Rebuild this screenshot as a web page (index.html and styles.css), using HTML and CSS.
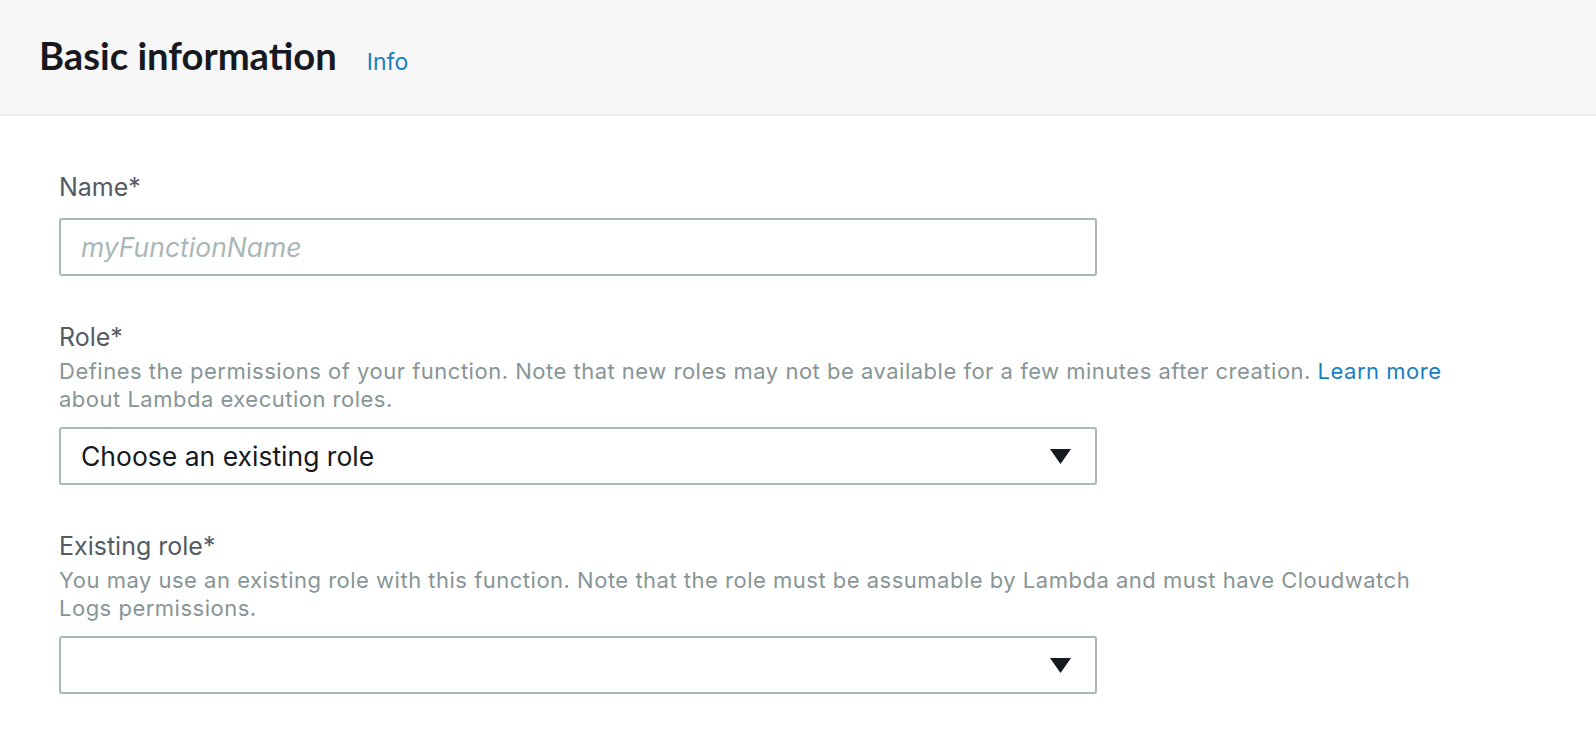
FILE: index.html
```html
<!DOCTYPE html>
<html lang="en">
<head>
<meta charset="utf-8">
<title>Basic information</title>
<link rel="stylesheet" href="styles.css">
</head>
<body>
<header class="panel-header">
  <h2 class="panel-title">Basic information</h2>
  <a class="info-link" href="#">Info</a>
</header>
<main class="panel-body">
  <div class="field field-first">
    <label class="field-label" for="fn-name">Name*</label>
    <input class="text-input" id="fn-name" type="text" placeholder="myFunctionName">
  </div>
  <div class="field">
    <div class="field-label">Role*</div>
    <p class="field-desc">Defines the permissions of your function. Note that new roles may not be available for a few minutes after creation. <a class="desc-link" href="#">Learn more</a><br>about Lambda execution roles.</p>
    <div class="select-box">
      <span class="select-value">Choose an existing role</span>
      <svg class="caret" width="21" height="15" viewBox="0 0 21 15"><polygon points="0,0 21,0 10.5,15" fill="#16191f"/></svg>
    </div>
  </div>
  <div class="field">
    <div class="field-label">Existing role*</div>
    <p class="field-desc">You may use an existing role with this function. Note that the role must be assumable by Lambda and must have Cloudwatch<br>Logs permissions.</p>
    <div class="select-box">
      <span class="select-value"></span>
      <svg class="caret" width="21" height="15" viewBox="0 0 21 15"><polygon points="0,0 21,0 10.5,15" fill="#16191f"/></svg>
    </div>
  </div>
</main>
</body>
</html>
```
FILE: styles.css
```css
html, body {
  margin: 0;
  padding: 0;
  background: #ffffff;
}
body {
  font-family: Inter, "Open Sans", sans-serif;
  color: #16191f;
}
.panel-header {
  box-sizing: border-box;
  height: 116px;
  padding: 32px 0 0 39px;
  background: #f7f7f7;
  border-bottom: 2px solid #e9ebeb;
  display: flex;
  align-items: baseline;
  gap: 30px;
}
.panel-title {
  margin: 0;
  font-family: Lato, Inter, sans-serif;
  font-weight: 700;
  font-size: 38.2px;
  line-height: 47px;
  color: #16191f;
}
.info-link {
  font-size: 23px;
  color: #1a7fc1;
  text-decoration: none;
}
.panel-body {
  padding: 58px 59px 0 59px;
}
.field {
  margin-top: 48px;
}
.field-first {
  margin-top: 0;
}
.field-label {
  display: block;
  font-size: 25px;
  line-height: 26px;
  color: #545b64;
}
.field-first .field-label {
  margin-bottom: 18px;
}
.field-desc {
  margin: 7px 0 14px 0;
  font-size: 22px;
  line-height: 28px;
  letter-spacing: 0.5px;
  color: #879596;
  white-space: nowrap;
}
.desc-link {
  color: #1a7fc1;
  text-decoration: none;
}
.text-input {
  display: block;
  box-sizing: border-box;
  width: 1038px;
  height: 58px;
  margin: 0;
  padding: 0 20px;
  border: 2px solid #aab7b8;
  border-radius: 3px;
  font-family: Inter, "Open Sans", sans-serif;
  font-size: 26.5px;
  color: #16191f;
  background: #ffffff;
  outline: none;
}
.text-input::placeholder {
  font-style: italic;
  color: #aab7b8;
}
.select-box {
  box-sizing: border-box;
  width: 1038px;
  height: 58px;
  padding: 0 24px 0 20px;
  border: 2px solid #aab7b8;
  border-radius: 3px;
  display: flex;
  align-items: center;
  justify-content: space-between;
  background: #ffffff;
}
.select-value {
  font-size: 26.5px;
  color: #16191f;
}
.caret {
  display: block;
  flex: none;
}
```
